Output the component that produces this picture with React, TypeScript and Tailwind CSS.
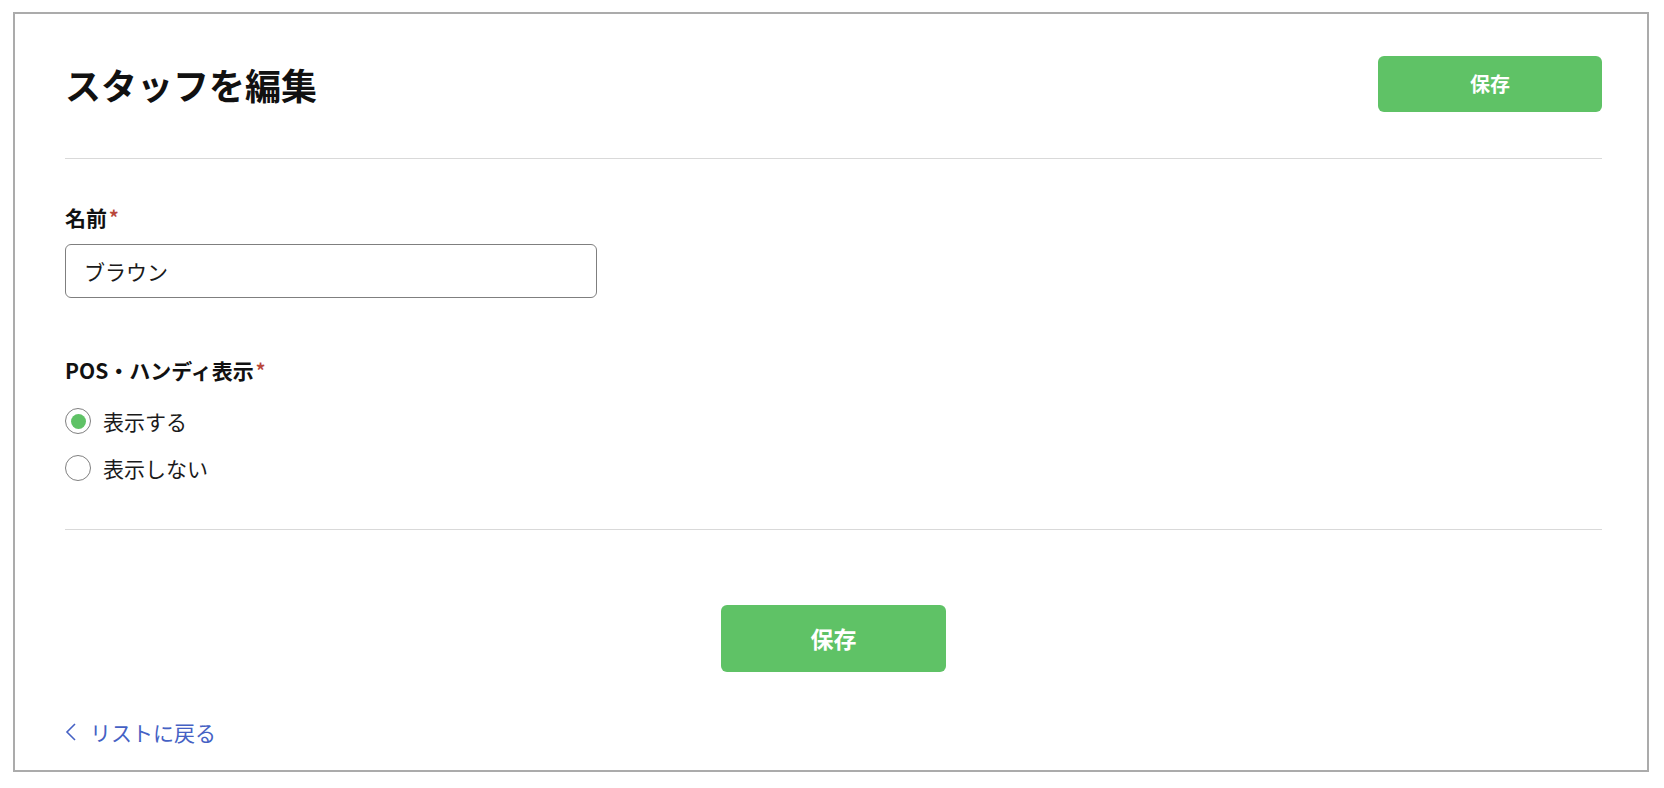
import { useState } from 'react';

const font = { fontFamily: '"Noto Sans CJK JP", "Noto Sans", sans-serif' };

function RequiredMark() {
  return <span className="ml-[2px] text-[19px] font-bold leading-[28px] text-[#b9473a]">*</span>;
}

function Radio({ checked, label, onClick }: { checked: boolean; label: string; onClick: () => void }) {
  return (
    <button type="button" onClick={onClick} className="flex h-[28px] items-center gap-[12px] text-left">
      <span className="flex h-[26px] w-[26px] items-center justify-center rounded-full border-[1.5px] border-[#7f7f7f] bg-white">
        {checked && <span className="h-[15px] w-[15px] rounded-full bg-[#5fc266]" />}
      </span>
      <span className="text-[21px] leading-[28px] text-[#1a1a1a]">{label}</span>
    </button>
  );
}

export default function App() {
  const [name, setName] = useState('ブラウン');
  const [visible, setVisible] = useState(true);

  return (
    <div className="min-h-[788px] bg-white pl-[13px] pr-[15px] pt-[12px]" style={font}>
      <div className="h-[760px] border-2 border-[#ababab] pl-[50px] pr-[45px] pt-[42px]">
        {/* header */}
        <div className="flex h-[56px] items-center justify-between">
          <h1 className="text-[36px] font-bold leading-[48px] text-[#111]">スタッフを編集</h1>
          <button className="h-[56px] w-[224px] rounded-[6px] bg-[#5fc266] text-[20px] font-bold text-white">
            保存
          </button>
        </div>

        <div className="mt-[46px] h-px bg-[#d9d9d9]" />

        {/* name */}
        <div className="mt-[44px] flex h-[28px] items-center text-[21px] font-bold leading-[28px] text-[#111]">
          名前
          <RequiredMark />
        </div>
        <input
          value={name}
          onChange={(e) => setName(e.target.value)}
          className="mt-[13px] block h-[54px] w-[532px] rounded-[6px] border border-[#7f7f7f] px-[18px] text-[21px] text-[#1a1a1a] outline-none"
          style={font}
        />

        {/* pos display */}
        <div className="mt-[58px] flex h-[28px] items-center text-[21px] font-bold leading-[28px] text-[#111]">
          POS・ハンディ表示
          <RequiredMark />
        </div>
        <div className="mt-[23px] flex flex-col gap-[19px]">
          <Radio checked={visible} label="表示する" onClick={() => setVisible(true)} />
          <Radio checked={!visible} label="表示しない" onClick={() => setVisible(false)} />
        </div>

        <div className="mt-[47px] h-px bg-[#d9d9d9]" />

        <div className="mt-[75px] flex justify-center">
          <button className="h-[67px] w-[225px] rounded-[6px] bg-[#5fc266] text-[23px] font-bold text-white">
            保存
          </button>
        </div>

        <a href="#" className="mt-[46px] flex h-[28px] items-center text-[21px] leading-[28px] text-[#4561c4]">
          <svg width="12" height="18" viewBox="0 0 12 18" className="mr-[13px]">
            <polyline points="10,1 2,9 10,17" fill="none" stroke="#4561c4" strokeWidth="1.6" />
          </svg>
          リストに戻る
        </a>
      </div>
    </div>
  );
}
